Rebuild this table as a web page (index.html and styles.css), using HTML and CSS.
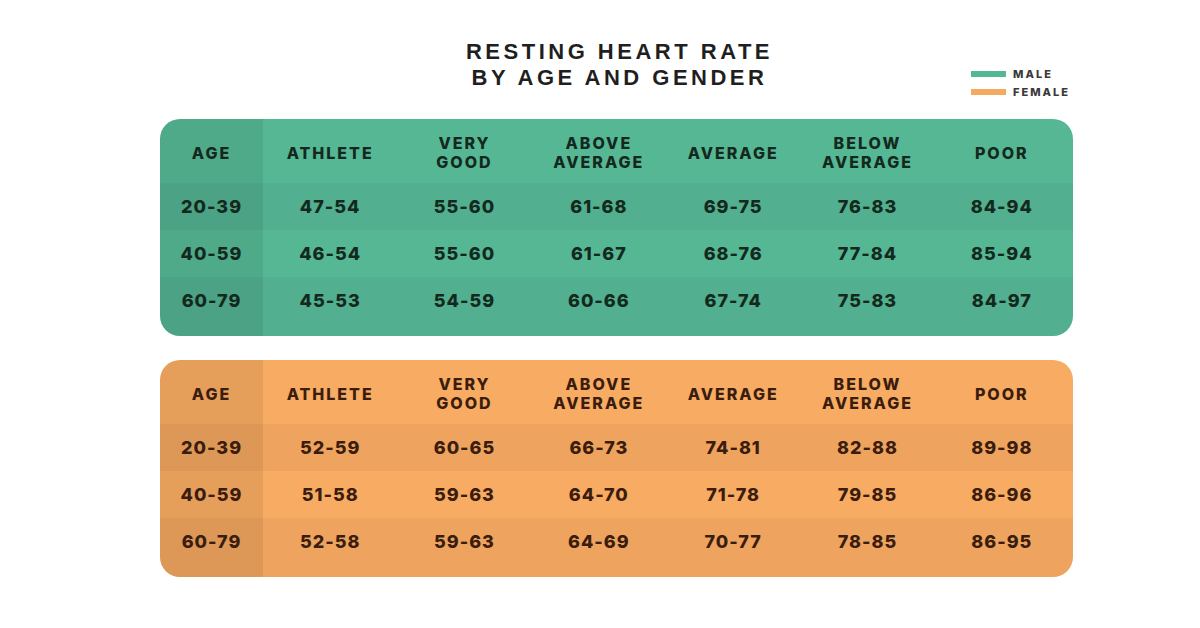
FILE: index.html
```html
<!DOCTYPE html>
<html lang="en">
<head>
  <meta charset="UTF-8">
  <meta name="viewport" content="width=device-width, initial-scale=1.0">
  <title>Resting Heart Rate</title>
  <link rel="stylesheet" href="styles.css">
</head>
<body>
  <div class="page">
    <header class="top">
      <div></div>
      <h1 class="title">RESTING HEART RATE<br>BY AGE AND GENDER</h1>
      <ul class="legend">
        <li><span class="swatch male-swatch"></span>MALE</li>
        <li><span class="swatch female-swatch"></span>FEMALE</li>
      </ul>
    </header>

    <!-- Мужчины -->
    <section class="chart male">
      <div class="row head">
        <div class="cell age">AGE</div>
        <div class="cell">ATHLETE</div>
        <div class="cell">VERY<br>GOOD</div>
        <div class="cell">ABOVE<br>AVERAGE</div>
        <div class="cell">AVERAGE</div>
        <div class="cell">BELOW<br>AVERAGE</div>
        <div class="cell">POOR</div>
      </div>
      <div class="row dark">
        <div class="cell age">20-39</div>
        <div class="cell">47-54</div>
        <div class="cell">55-60</div>
        <div class="cell">61-68</div>
        <div class="cell">69-75</div>
        <div class="cell">76-83</div>
        <div class="cell">84-94</div>
      </div>
      <div class="row">
        <div class="cell age">40-59</div>
        <div class="cell">46-54</div>
        <div class="cell">55-60</div>
        <div class="cell">61-67</div>
        <div class="cell">68-76</div>
        <div class="cell">77-84</div>
        <div class="cell">85-94</div>
      </div>
      <div class="row dark">
        <div class="cell age">60-79</div>
        <div class="cell">45-53</div>
        <div class="cell">54-59</div>
        <div class="cell">60-66</div>
        <div class="cell">67-74</div>
        <div class="cell">75-83</div>
        <div class="cell">84-97</div>
      </div>
    </section>

    <!-- Женщины -->
    <section class="chart female">
      <div class="row head">
        <div class="cell age">AGE</div>
        <div class="cell">ATHLETE</div>
        <div class="cell">VERY<br>GOOD</div>
        <div class="cell">ABOVE<br>AVERAGE</div>
        <div class="cell">AVERAGE</div>
        <div class="cell">BELOW<br>AVERAGE</div>
        <div class="cell">POOR</div>
      </div>
      <div class="row dark">
        <div class="cell age">20-39</div>
        <div class="cell">52-59</div>
        <div class="cell">60-65</div>
        <div class="cell">66-73</div>
        <div class="cell">74-81</div>
        <div class="cell">82-88</div>
        <div class="cell">89-98</div>
      </div>
      <div class="row">
        <div class="cell age">40-59</div>
        <div class="cell">51-58</div>
        <div class="cell">59-63</div>
        <div class="cell">64-70</div>
        <div class="cell">71-78</div>
        <div class="cell">79-85</div>
        <div class="cell">86-96</div>
      </div>
      <div class="row dark">
        <div class="cell age">60-79</div>
        <div class="cell">52-58</div>
        <div class="cell">59-63</div>
        <div class="cell">64-69</div>
        <div class="cell">70-77</div>
        <div class="cell">78-85</div>
        <div class="cell">86-95</div>
      </div>
    </section>
  </div>
</body>
</html>
```

FILE: styles.css
```css
body {
  margin: 0;
  background-color: #ffffff;
  font-family: Inter, "Liberation Sans", sans-serif;
}
.page {
  width: 913px;
  margin: 0 0 0 160px;
  padding-top: 39px;
}
.top {
  display: grid;
  grid-template-columns: 1fr auto 1fr;
  margin-bottom: 18px;
}
.title {
  margin: 0;
  padding-left: 6px;
  font-family: "Liberation Sans", Arial, sans-serif;
  font-size: 22px;
  line-height: 26px;
  font-weight: 700;
  letter-spacing: 3.5px;
  text-align: center;
  color: #1f1f1f;
}
.legend {
  list-style: none;
  margin: 26px 3px 0 0;
  padding: 0;
  justify-self: end;
}
.legend li {
  display: flex;
  align-items: center;
  height: 18px;
  font-size: 11px;
  font-weight: 800;
  letter-spacing: 2px;
  color: #3a3a3a;
}
.swatch {
  width: 35px;
  height: 6px;
  margin-right: 7px;
}
.male-swatch {
  background-color: #55b895;
}
.female-swatch {
  background-color: #f5aa60;
}
.chart {
  border-radius: 20px;
  overflow: hidden;
  margin-bottom: 24px;
}
.chart.male {
  background-color: #56b795;
  color: #14291d;
}
.chart.female {
  background-color: #f8ab62;
  color: #3a1d0e;
}
.row {
  display: grid;
  grid-template-columns: 103px repeat(6, 1fr);
  padding-right: 4px;
}
.row.dark {
  background-color: rgba(0, 0, 0, 0.04);
}
.cell {
  display: flex;
  align-items: center;
  justify-content: center;
  height: 47px;
  box-sizing: border-box;
  font-size: 18px;
  font-weight: 800;
  letter-spacing: 1px;
  text-align: center;
}
.row:last-child .cell {
  height: 59px;
  padding-bottom: 12px;
}
.row.head .cell {
  height: 64px;
  padding-top: 4px;
  font-size: 16px;
  line-height: 19px;
  letter-spacing: 2px;
}
.cell.age {
  background-color: rgba(0, 0, 0, 0.07);
}
```
